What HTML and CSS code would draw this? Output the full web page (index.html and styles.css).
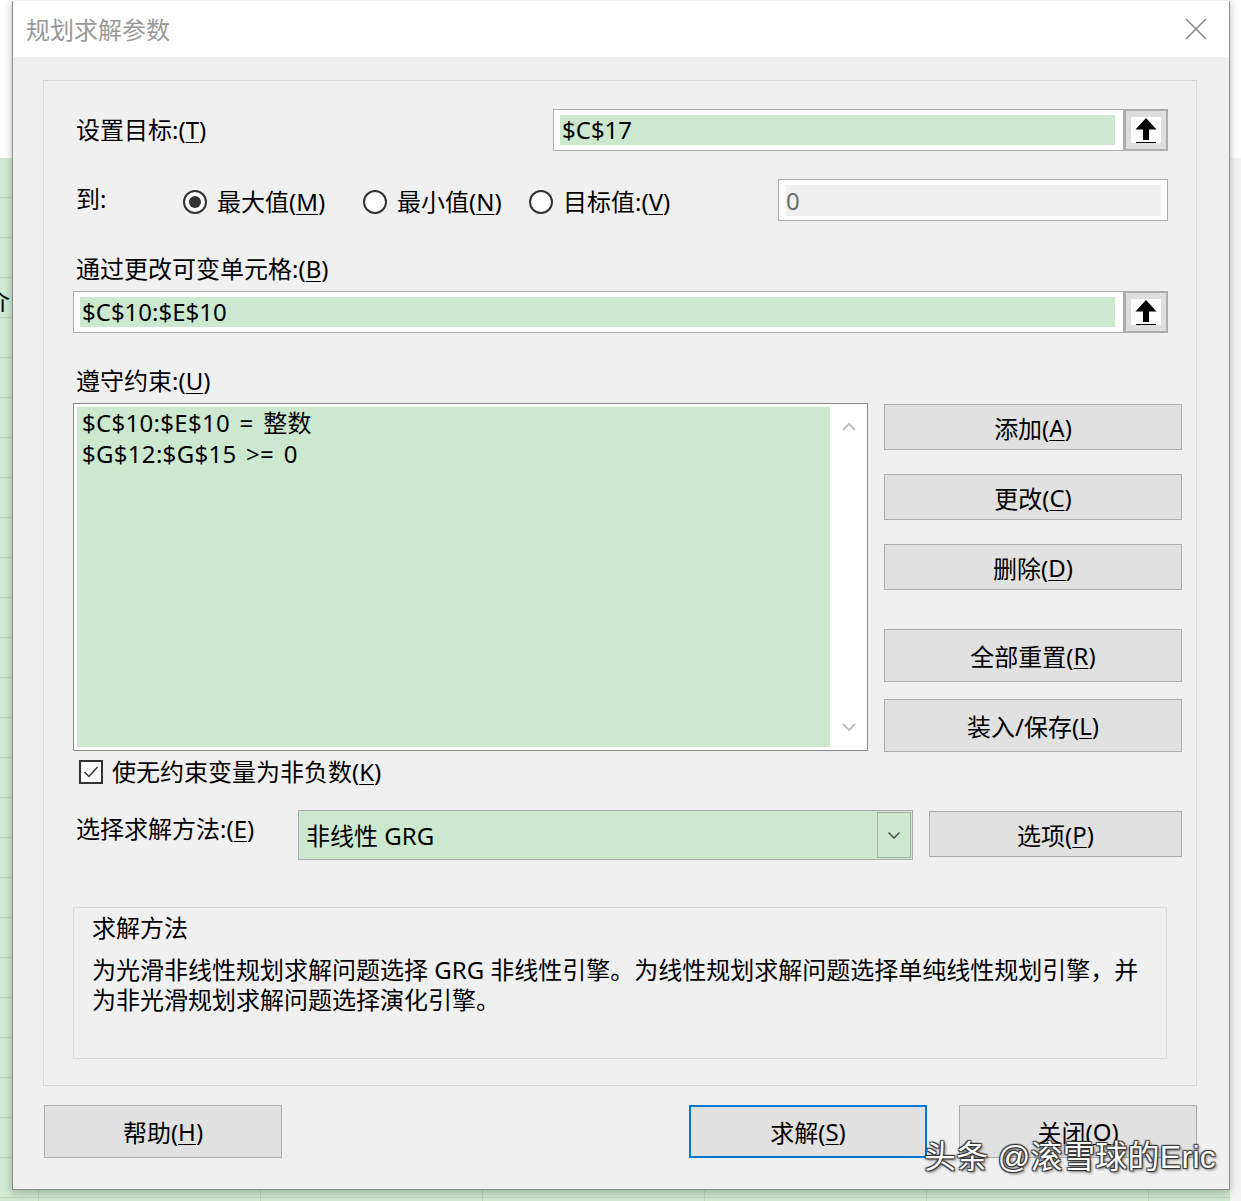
FILE: index.html
```html
<!DOCTYPE html>
<html lang="zh-CN">
<head>
<meta charset="utf-8">
<title>规划求解参数</title>
<link rel="stylesheet" href="styles.css">
</head>
<body>
<div class="dialog">
  <div class="titlebar">
    <span class="title">规划求解参数</span>
    <svg class="close" width="22" height="22" viewBox="0 0 22 22"><path d="M1 1 L21 21 M21 1 L1 21" stroke="#8a8a8a" stroke-width="1.6" fill="none"/></svg>
  </div>

  <div class="group">
    <div class="row row-target">
      <span class="label">设置目标:(<u>T</u>)</span>
      <div class="refedit refedit-short">
        <div class="refedit-box"><div class="refedit-field">$C$17</div></div>
        <div class="refedit-btn">
          <svg width="30" height="26" viewBox="0 0 30 26"><rect width="30" height="26" fill="#fff"/><path d="M15 1 L25.5 12.5 L18 12.5 L18 23 L12 23 L12 12.5 L4.5 12.5 Z" fill="#000"/><path d="M5 25.5 H25" stroke="#000" stroke-width="1"/></svg>
        </div>
      </div>
    </div>

    <div class="row row-to">
      <span class="label label-to">到:</span>
      <span class="radio-item item-max"><span class="radio checked"></span><span>最大值(<u>M</u>)</span></span>
      <span class="radio-item item-min"><span class="radio"></span><span>最小值(<u>N</u>)</span></span>
      <span class="radio-item"><span class="radio"></span><span>目标值:(<u>V</u>)</span></span>
      <div class="value-box"><div class="value-field">0</div></div>
    </div>

    <div class="label block-label">通过更改可变单元格:(<u>B</u>)</div>
    <div class="refedit refedit-long">
      <div class="refedit-box"><div class="refedit-field">$C$10:$E$10</div></div>
      <div class="refedit-btn">
        <svg width="30" height="26" viewBox="0 0 30 26"><rect width="30" height="26" fill="#fff"/><path d="M15 1 L25.5 12.5 L18 12.5 L18 23 L12 23 L12 12.5 L4.5 12.5 Z" fill="#000"/><path d="M5 25.5 H25" stroke="#000" stroke-width="1"/></svg>
      </div>
    </div>

    <div class="label block-label">遵守约束:(<u>U</u>)</div>
    <div class="constraints">
      <div class="listbox">
        <div class="list-items">
          <div class="list-line">$C$10:$E$10 = 整数</div>
          <div class="list-line">$G$12:$G$15 &gt;= 0</div>
        </div>
        <div class="scrollbar">
          <svg width="14" height="9" viewBox="0 0 14 9"><path d="M1 8 L7 2 L13 8" stroke="#c2c2c2" stroke-width="2" fill="none"/></svg>
          <svg width="14" height="9" viewBox="0 0 14 9"><path d="M1 1 L7 7 L13 1" stroke="#c2c2c2" stroke-width="2" fill="none"/></svg>
        </div>
      </div>
      <div class="side-buttons">
        <div class="btn btn-s">添加(<u>A</u>)</div>
        <div class="btn btn-s gap24">更改(<u>C</u>)</div>
        <div class="btn btn-s gap24">删除(<u>D</u>)</div>
        <div class="btn btn-l gap39">全部重置(<u>R</u>)</div>
        <div class="btn btn-l gap17">装入/保存(<u>L</u>)</div>
      </div>
    </div>

    <div class="check-row">
      <span class="checkbox">
        <svg width="20" height="20" viewBox="0 0 20 20"><path d="M3.5 10 L8 14.5 L16.5 5" stroke="#333" stroke-width="1.5" fill="none"/></svg>
      </span>
      <span class="check-label">使无约束变量为非负数(<u>K</u>)</span>
    </div>

    <div class="method-row">
      <span class="label method-label">选择求解方法:(<u>E</u>)</span>
      <div class="combo">
        <span class="combo-text">非线性 GRG</span>
        <span class="combo-btn">
          <svg width="14" height="9" viewBox="0 0 14 9"><path d="M1.5 1.5 L7 7 L12.5 1.5" stroke="#444" stroke-width="1.3" fill="none"/></svg>
        </span>
      </div>
      <div class="btn btn-options">选项(<u>P</u>)</div>
    </div>

    <div class="desc">
      <div class="desc-title">求解方法</div>
      <div class="desc-text">为光滑非线性规划求解问题选择 GRG 非线性引擎。为线性规划求解问题选择单纯线性规划引擎，并<br>为非光滑规划求解问题选择演化引擎。</div>
    </div>
  </div>

  <div class="bottom-row">
    <div class="btn btn-bottom">帮助(<u>H</u>)</div>
    <div class="btn btn-bottom btn-default">求解(<u>S</u>)</div>
    <div class="btn btn-bottom btn-close">关闭(<u>O</u>)</div>
  </div>
</div>
<div class="bg-glyph">介</div>
<div class="watermark">头条 @滚雪球的Eric</div>
</body>
</html>
```

FILE: styles.css
```css
html, body {
  margin: 0;
  padding: 0;
}

body {
  width: 1241px;
  height: 1201px;
  overflow: hidden;
  position: relative;
  font-family: "Noto Sans", "Noto Sans CJK SC", sans-serif;
  font-size: 24px;
  color: #000;
  background:
    linear-gradient(to bottom, #ffffff 0 158px, transparent 158px),
    linear-gradient(to left, #f4f4f4 0 11px, transparent 11px),
    repeating-linear-gradient(to right, transparent 0 38px, #b9d6b9 38px 39px, transparent 39px 222px),
    repeating-linear-gradient(to bottom, transparent 0 37px, #b9d6b9 37px 38px, transparent 38px 40px),
    #d0e9d1;
}

u {
  text-decoration: underline;
  text-underline-offset: 3px;
  text-decoration-thickness: 1px;
}

.dialog {
  margin: 1px 0 0 12px;
  width: 1218px;
  height: 1189px;
  box-sizing: border-box;
  background: #f0f0f0;
  border: 1px solid #8e8e8e;
  border-top: none;
  box-shadow: 0 2px 8px rgba(0, 0, 0, 0.28);
  display: flex;
  flex-direction: column;
  position: relative;
  z-index: 1;
}

.titlebar {
  height: 56px;
  background: #fff;
  display: flex;
  align-items: center;
  padding: 0 22px 0 13px;
  flex-shrink: 0;
}

.title {
  color: #999;
  font-size: 24px;
  line-height: 32px;
  font-family: "Noto Sans CJK SC", sans-serif;
}

.close {
  margin-left: auto;
}

.group {
  margin: 23px 32px 0 30px;
  height: 1006px;
  box-sizing: border-box;
  border: 1px solid #d9d9d9;
  padding: 28px 14px 0 29px;
  flex-shrink: 0;
}

.label {
  line-height: 32px;
  white-space: nowrap;
  padding-left: 3px;
}

.row {
  display: flex;
  align-items: center;
  height: 42px;
  margin-right: 14px;
}

.refedit {
  display: flex;
  height: 42px;
}

.refedit-short {
  margin-left: auto;
  width: 615px;
}

.refedit-long {
  margin-top: 6px;
  margin-right: 14px;
}

.refedit-box {
  flex: 1;
  box-sizing: border-box;
  height: 42px;
  border: 1px solid #adadad;
  background: #fff;
  padding: 5px 8px 5px 6px;
}

.refedit-field {
  height: 30px;
  background: #cce8cf;
  line-height: 30px;
  padding-left: 2px;
}

.refedit-btn {
  width: 44px;
  height: 42px;
  box-sizing: border-box;
  border: 2px solid #adadad;
  background: #dedede;
  display: flex;
  align-items: center;
  justify-content: center;
}

.row-to {
  margin-top: 28px;
}

.label-to {
  width: 107px;
  margin-top: -2px;
}

.radio-item {
  display: flex;
  align-items: center;
  line-height: 32px;
  white-space: nowrap;
  margin-top: 3px;
}

.item-max {
  width: 180px;
}

.item-min {
  width: 166px;
}

.radio {
  width: 24px;
  height: 24px;
  box-sizing: border-box;
  border: 2px solid #333;
  border-radius: 50%;
  background: #fff;
  margin-right: 10px;
  display: flex;
  align-items: center;
  justify-content: center;
}

.radio.checked::after {
  content: "";
  width: 12px;
  height: 12px;
  border-radius: 50%;
  background: #333;
}

.value-box {
  margin-left: auto;
  width: 390px;
  height: 42px;
  box-sizing: border-box;
  border: 1px solid #adadad;
  background: #fff;
  padding: 5px 6px 4px 7px;
}

.value-field {
  height: 31px;
  background: #f0f0f0;
  color: #6d6d6d;
  line-height: 31px;
}

.block-label {
  margin-top: 32px;
}

.constraints {
  display: flex;
  margin-top: 6px;
}

.listbox {
  width: 795px;
  height: 348px;
  box-sizing: border-box;
  border: 1px solid #8a8a8a;
  background: #fff;
  padding: 3px 0 3px 3px;
  display: flex;
}

.list-items {
  width: 753px;
  background: #cce8cf;
  padding: 0 0 0 5px;
  box-sizing: border-box;
}

.list-line {
  line-height: 31px;
  word-spacing: 3px;
  letter-spacing: 0.3px;
}

.scrollbar {
  flex: 1;
  display: flex;
  flex-direction: column;
  align-items: center;
  justify-content: space-between;
  padding: 15px 0 15px 0;
}

.side-buttons {
  margin-left: 16px;
  margin-top: 1px;
  width: 298px;
  display: flex;
  flex-direction: column;
}

.btn {
  box-sizing: border-box;
  border: 1px solid #adadad;
  background: #e1e1e1;
  display: flex;
  align-items: center;
  justify-content: center;
  white-space: nowrap;
}

.btn-s {
  height: 46px;
}

.btn-l {
  height: 53px;
}

.gap24 {
  margin-top: 24px;
}

.gap39 {
  margin-top: 39px;
}

.gap17 {
  margin-top: 17px;
}

.check-row {
  display: flex;
  align-items: center;
  height: 32px;
  margin-top: 4px;
  padding-left: 6px;
}

.checkbox {
  width: 24px;
  height: 24px;
  box-sizing: border-box;
  border: 2px solid #333;
  background: #fff;
  display: flex;
  align-items: center;
  justify-content: center;
}

.check-label {
  margin-left: 9px;
  line-height: 32px;
}

.method-row {
  display: flex;
  align-items: flex-start;
  margin-top: 22px;
}

.method-label {
  width: 222px;
  margin-top: 3px;
}

.combo {
  width: 615px;
  height: 50px;
  box-sizing: border-box;
  border: 1px solid #ababab;
  background: #cce8cf;
  display: flex;
  align-items: center;
  padding: 0 1px 0 7px;
}

.combo-text {
  line-height: 32px;
  margin-top: 2px;
}

.combo-btn {
  margin-left: auto;
  width: 34px;
  height: 46px;
  box-sizing: border-box;
  border: 1px solid #adadad;
  display: flex;
  align-items: center;
  justify-content: center;
}

.btn-options {
  margin-left: 16px;
  margin-top: 1px;
  width: 253px;
  height: 46px;
}

.desc {
  margin-top: 47px;
  width: 1094px;
  height: 152px;
  box-sizing: border-box;
  border: 1px solid #dadada;
  padding: 4px 0 0 18px;
}

.desc-title {
  line-height: 32px;
}

.desc-text {
  margin-top: 11px;
  line-height: 30px;
  white-space: nowrap;
}

.bottom-row {
  display: flex;
  margin-top: 19px;
  padding: 0 32px 0 31px;
}

.btn-bottom {
  width: 238px;
  height: 53px;
}

.btn-default {
  margin-left: auto;
  border: 2px solid #0078d7;
}

.btn-close {
  margin-left: 32px;
}

.bg-glyph {
  position: absolute;
  left: -14px;
  top: 284px;
  font-family: "Noto Sans CJK SC", sans-serif;
  font-size: 24px;
  line-height: 32px;
  color: #000;
}

.watermark {
  position: absolute;
  z-index: 2;
  left: 924px;
  top: 1136px;
  font-family: "Liberation Sans", "Noto Sans CJK SC", sans-serif;
  font-size: 32px;
  line-height: 42px;
  letter-spacing: 0.3px;
  color: #fff;
  white-space: nowrap;
  text-shadow: 1px 1px 1px #333, -1px -1px 1px #333, 1px -1px 1px #333, -1px 1px 1px #333, 2px 2px 3px rgba(0,0,0,0.5);
}
```
